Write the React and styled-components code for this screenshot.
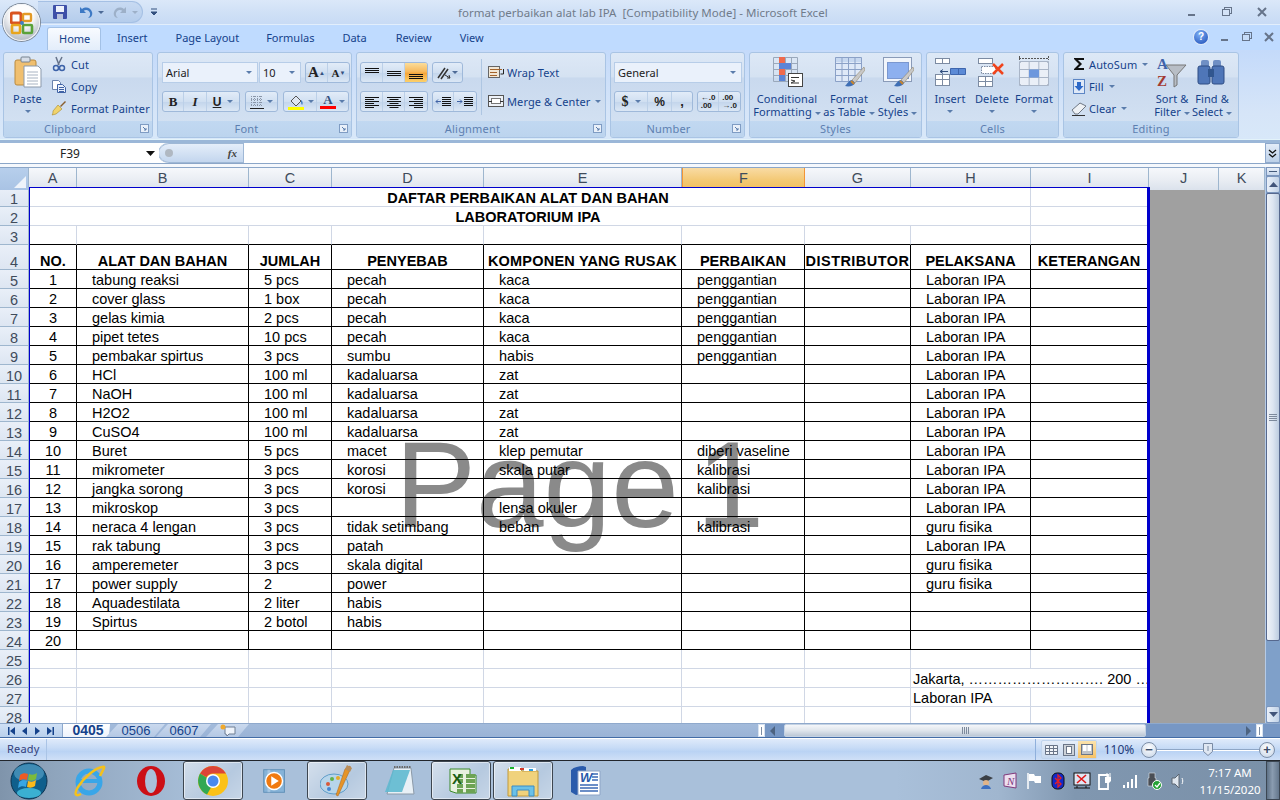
import React from 'react';
import styled, { createGlobalStyle } from 'styled-components';

const Global = createGlobalStyle`
  html, body { margin: 0; padding: 0; width: 1280px; height: 800px; overflow: hidden; background: #bfdbff; }
  #root { width: 1280px; height: 800px; }
  * { box-sizing: border-box; }
`;
const UI = `"Noto Sans", "Open Sans", sans-serif`;
const ARIAL = `"Liberation Sans", Arial, sans-serif`;

const Window = styled.div`
  position: relative; width: 1280px; height: 800px; display: flex; flex-direction: column; overflow: hidden;
  font-family: ${UI}; background: #bfdbff;
`;

/* ---------- title bar ---------- */
const TitleBar = styled.div`
  height: 25px; flex: none; display: flex; align-items: center; position: relative;
  background: linear-gradient(#dbe8f9, #cfe0f6 55%, #c8dbf5); border-bottom: 1px solid #e2eefc; box-shadow: 0 1px 0 #a9c6ea;
`;
const OfficeBtn = styled.div`
  position: absolute; left: 3px; top: 4px; width: 37px; height: 37px; border-radius: 50%; z-index: 5;
  display: flex; align-items: center; justify-content: center;
  background: radial-gradient(circle at 50% 30%, #fdfdfd 0 35%, #c9ced6 65%, #9aa3ad 100%);
  box-shadow: 0 0 0 1px #7e8a99, inset 0 0 0 1px #f4f5f7;
`;
const Qat = styled.div`
  margin-left: 38px; width: 105px; height: 22px; display: flex; align-items: center; gap: 4px; padding-left: 14px;
  background: linear-gradient(#c8daf2, #b5cdec); border: 1px solid #a5c0e4; border-left: none; border-radius: 0 11px 11px 0;
`;
const TitleText = styled.div`
  position: absolute; left: 458px; top: 5px; font-size: 11.5px; line-height: 16px; color: #707b8a; white-space: pre; letter-spacing: .03px;
`;
const WinCtrls = styled.div`
  margin-left: auto; display: flex; align-items: center; gap: 25px; padding-right: 13px;
`;
const Ctl = styled.svg`
  width: 10px; height: 10px; display: block; flex: none;
`;

/* ---------- tabs ---------- */
const TabRow = styled.div`
  height: 25px; flex: none; display: flex; align-items: flex-end; background: #bfdbff; padding-left: 47px; position: relative;
`;
const RibbonTab = styled.div`
  height: 23px; font-size: 11px; line-height: 21px; color: #15428b; margin-left: ${p => p.$ml || 0}px;
  ${p => p.$active && `
    width: 54px; padding-left: 11px;
    background: linear-gradient(#f8fbff, #e3edfa); border: 1px solid #a3c1e6; border-bottom: none; border-radius: 3px 3px 0 0;
  `}
`;
const HelpBox = styled.div`
  margin-left: auto; display: flex; align-items: center; gap: 12px; padding: 0 6px 6px 0;
`;
const Help = styled.div`
  width: 14px; height: 14px; border-radius: 50%; background: radial-gradient(circle at 40% 30%, #7fb0f5, #1849b5);
  color: #fff; font: bold 10px/14px ${ARIAL}; text-align: center; box-shadow: 0 0 0 1px #dfe9f8;
`;

/* ---------- ribbon ---------- */
const Ribbon = styled.div`
  height: 93px; flex: none; display: flex; gap: 4px; padding: 2px 3px 0 3px;
  background: linear-gradient(#c4dafa, #d6e5f8 70%, #d8e8f9); border-bottom: 3px solid #9bb7d8; box-shadow: inset 0 -1px 0 #e3f3fa;
`;
const Group = styled.div`
  width: ${p => p.$w}px; flex: none; height: 86px; display: flex; flex-direction: column; overflow: hidden;
  border: 1px solid #a9c4e4; border-radius: 3px; background: linear-gradient(#dde8f6, #d5e2f2 28%, #c9d9ee 30%, #d5e3f3);
`;
const GroupBody = styled.div`
  flex: 1; display: flex; min-height: 0;
`;
const GroupFoot = styled.div`
  height: 16px; flex: none; position: relative; background: linear-gradient(#c1d8f1, #bcd4ee); padding-right: ${p => p.$pr || 0}px;
  color: #5d7fb0; font-size: 11px; line-height: 15px; text-align: center; letter-spacing: .2px;
`;
const Launcher = styled.svg`
  position: absolute; right: 3px; top: 3px; width: 9px; height: 9px;
`;
const BigBtn = styled.div`
  width: ${p => p.$w}px; flex: none; display: flex; flex-direction: column; align-items: center; padding-top: 3px;
  color: #15428b; font-size: 11px; line-height: 13px; text-align: center; white-space: nowrap; letter-spacing: .1px;
`;
const BigIcon = styled.svg`
  width: 32px; height: 32px; display: block; margin-bottom: 4px; flex: none;
`;
const Caret = styled.span`
  display: inline-block; width: 0; height: 0; border: 3px solid transparent; border-top: 3px solid ${p => p.$c || '#5a7cab'}; border-bottom: none;
  vertical-align: middle; margin-left: ${p => p.$ml ?? 3}px; margin-top: ${p => p.$mt || 0}px;
`;
const SmallCol = styled.div`
  display: flex; flex-direction: column; gap: ${p => p.$gap || 0}px; padding: ${p => p.$top ?? 0}px 0 0 ${p => p.$left || 0}px; flex: none; width: ${p => p.$w ? `${p.$w}px` : 'auto'};
`;
const SmallBtn = styled.div`
  height: 22px; display: flex; align-items: center; gap: ${p => p.$gap ?? 4}px; font-size: 11px; color: #15428b; white-space: nowrap; letter-spacing: .1px;
`;
const Small = styled.svg`
  width: 16px; height: 16px; flex: none; display: block;
`;
const Rows = styled.div`
  display: flex; flex-direction: column; gap: 8px; padding: 9px 0 0 ${p => p.$left ?? 3}px;
`;
const Line = styled.div`
  display: flex; gap: ${p => p.$gap ?? 4}px; align-items: center;
`;
const Combo = styled.div`
  width: ${p => p.$w}px; height: 21px; background: #eaf1fb; border: 1px solid #b7cde8; display: flex; align-items: center; justify-content: space-between;
  padding: 0 5px 0 3px; font-size: 11px; color: #222;
`;
const BtnGroup = styled.div`
  height: 21px; display: flex; border: 1px solid #9fb9da; border-radius: 3px; background: linear-gradient(#e2ecf8, #d0dff1 50%, #c4d6ec 55%, #dbe7f5); overflow: hidden;
`;
const Seg = styled.div`
  width: ${p => p.$w || 23}px; flex: none; display: flex; align-items: center; justify-content: center; border-right: 1px solid #bcd0e8;
  font: ${p => p.$font || `bold 12px ${ARIAL}`}; color: #222;
  &:last-child { border-right: none; }
  ${p => p.$on && 'background: linear-gradient(#fbdd9a, #f7b95c 45%, #f5a73c 55%, #fcd06b);'}
`;
const Divider = styled.div`
  width: 1px; height: 56px; background: #aec6e2; margin: 6px 6px 0 4px; flex: none;
`;

/* ---------- formula bar ---------- */
const FormulaBar = styled.div`
  height: 21px; flex: none; display: flex; background: #fff; border-bottom: 1px solid #8ba6c8;
`;
const NameBox = styled.div`
  width: 159px; display: flex; align-items: center; background: #fff; font: 12px ${UI}; color: #222; padding-left: 60px; position: relative;
`;
const NameCaret = styled.svg`
  position: absolute; left: 146px; top: 8px; width: 9px; height: 5px;
`;
const FxBlock = styled.div`
  width: 85px; height: 20px; background: linear-gradient(#e5eefa, #c3d6ee); border: 1px solid #9fb8d6; border-left: none; border-radius: 11px 0 0 11px;
  box-shadow: -1px 0 0 #9fb8d6; display: flex; align-items: center; justify-content: space-between; padding: 0 6px 0 6px;
  font: italic bold 11px "Liberation Serif", serif; color: #444;
`;
const Dot = styled.div`
  width: 8px; height: 8px; border-radius: 50%; background: #b0b8c2;
`;
const FormulaInput = styled.div`
  flex: 1; background: #fff;
`;
const Expand = styled.div`
  width: 15px; background: linear-gradient(#e3ecf8, #bcd0e8); border: 1px solid #8fa9cc; display: flex; align-items: center; justify-content: center;
`;
const Gap = styled.div`
  height: 3px; flex: none; background: #f5f8fc;
`;

/* ---------- sheet ---------- */
const SheetWrap = styled.div`
  height: 556px; flex: none; display: flex; position: relative; overflow: hidden; background: #a0a0a0;
`;
const SheetMain = styled.div`
  width: 1265px; flex: none; overflow: hidden; display: flex; flex-direction: column;
`;
const ColHead = styled.div`
  height: 21px; flex: none; display: grid; grid-template-columns: 29px 48px 172px 83px 152px 198px 123px 106px 120px 118px 70px 46px;
  border-top: 1px solid #8ba6c8; border-bottom: 1px solid #9eb6ce;
`;
const Corner = styled.div`
  background: linear-gradient(#b7cfec, #a9c3e4); border-right: 1px solid #9eb6ce; position: relative; overflow: hidden;
  &::after { content: ''; position: absolute; right: 2px; bottom: 2px; border-style: solid; border-width: 0 0 12px 12px; border-color: transparent transparent #eef3fa transparent; }
`;
const ColCell = styled.div`
  font: 14.5px/21px ${ARIAL}; text-align: center; color: #3f4b5b; border-right: 1px solid #9eb6ce;
  background: ${p => p.$on ? 'linear-gradient(#f9dba4, #f3c873 60%, #f1c05f)' : 'linear-gradient(#f6f8fb, #e9edf3 55%, #dbe2ec)'};
  ${p => p.$on && 'border: 1px solid #f29536; border-top: none;'}
`;
const Body = styled.div`
  display: flex; flex: 1; min-height: 0; align-items: flex-start;
`;
const RowHead = styled.div`
  width: 29px; flex: none; display: flex; flex-direction: column; background: #e4ecf7;
`;
const RowNum = styled.div`
  height: ${p => p.$h || 19}px; flex: none; font: 14.5px/14px ${ARIAL}; color: #3f4b5b; text-align: center; border-bottom: 1px solid #9eb6ce;
  border-right: 1px solid #9eb6ce; background: linear-gradient(#e9eff8, #dde6f2); display: flex; align-items: flex-end; justify-content: center;
`;
const Grid = styled.div`
  width: 1121px; flex: none; display: grid; grid-template-columns: 47px 172px 83px 152px 198px 123px 106px 120px 116px;
  grid-template-rows: repeat(3, 19px) 25px repeat(24, 19px);
  background: #fff; border-top: 1px solid #0000cc; border-left: 1px solid #0000cc; border-right: 3px solid #0000cc; margin-top: -1px; position: relative;
`;
const Cell = styled.div`
  position: relative; z-index: 1;
  font: 14.5px/16px ${ARIAL}; color: #000; white-space: nowrap; overflow: hidden; min-width: 0;
  display: flex; align-items: flex-end; padding: 0 ${p => p.$padR || 0}px 0 ${p => p.$pad ?? 15}px;
  justify-content: ${p => p.$center ? 'center' : 'flex-start'};
  font-weight: ${p => p.$bold ? 700 : 400};
  letter-spacing: ${p => p.$ls || 0}px;
  border-right: 1px solid ${p => p.$line ? '#000' : '#d0d7e5'};
  border-bottom: 1px solid ${p => (p.$line || p.$below) ? '#000' : '#d0d7e5'};
  ${p => p.$span && `grid-column: span ${p.$span};`}
  ${p => p.$noRight && 'border-right: none;'}
`;
const Watermark = styled.div`
  position: absolute; z-index: 0; left: 365px; top: 237px; font: 121.5px/1 ${ARIAL}; word-spacing: -16px; color: #8a8a8a; white-space: nowrap; pointer-events: none;
`;
const VScroll = styled.div`
  width: 15px; flex: none; display: flex; flex-direction: column; background: #7fa0c9; border-left: 1px solid #b6cbe6;
`;
const Splitter = styled.div`
  height: 9px; flex: none; background: linear-gradient(#e8eff9, #c7d7ec); border: 1px solid #7b95bc; display: flex; align-items: center; justify-content: center;
  &::after { content: ''; width: 8px; height: 1px; background: #43597a; }
`;
const ArrowBtn = styled.div`
  height: 17px; flex: none; display: flex; align-items: center; justify-content: center;
  background: linear-gradient(90deg, #e9eff8, #d6e2f1 50%, #c2d2e7); border: 1px solid #7b95bc; border-radius: 2px;
`;
const Thumb = styled.div`
  height: 448px; flex: none; border: 1px solid #56688e; border-radius: 2px; display: flex; align-items: center; justify-content: center;
  background: linear-gradient(90deg, #eef2f8, #dce5f1 50%, #bccce0);
`;
const Grip = styled.div`
  width: 8px; height: 7px; background: repeating-linear-gradient(#7d8a9c 0 1px, transparent 1px 2px);
`;
const Spring = styled.div`
  flex: 1;
`;

/* ---------- sheet tabs ---------- */
const TabBar = styled.div`
  height: 15px; flex: none; display: flex; align-items: stretch; background: linear-gradient(#a3bbdb, #9ab3d6); border-top: 1px solid #8fa9cc; border-bottom: 1px solid #436ca6;
`;
const TabNav = styled.div`
  width: 63px; flex: none; background: linear-gradient(#cfe0f5, #b9d0ec); display: flex; align-items: center; justify-content: space-around; padding: 0 4px; color: #15428b; border-right: 1px solid #8fa9cc;
`;
const SheetTab = styled.div`
  height: 13px; width: ${p => p.$w}px; flex: none; margin-left: ${p => p.$ml || 0}px; color: #15428b; text-align: center;
  font: ${p => p.$on ? `bold 14px/13px ${ARIAL}` : `13px/13px ${ARIAL}`}; padding-left: ${p => p.$on ? 3 : 0}px;
  background: ${p => p.$on ? 'linear-gradient(#fff, #eef3fb)' : 'linear-gradient(#cad9ee, #b4c8e4)'};
  clip-path: ${p => p.$on ? 'polygon(0 0, 100% 0, calc(100% - 1px) 100%, 0 100%)' : 'polygon(0 100%, 12px 0, calc(100% - 1px) 0, calc(100% - 12px) 100%)'};
`;
const NewTab = styled(SheetTab)`
  display: flex; align-items: center; justify-content: center;
`;
const TabRest = styled.div`
  flex: 1; display: flex; align-items: center; justify-content: flex-end;
`;
const HArea = styled.div`
  height: 100%; display: flex; align-items: center; background: #7797c4;
`;
const Handle = styled.div`
  width: 7px; height: 13px; background: #fff; border: 1px solid #d8e3f1; flex: none; display: flex; align-items: center; justify-content: center;
  &::after { content: ''; width: 1px; height: 8px; background: #7b8ca3; }
`;
const HTri = styled.div`
  width: 0; height: 0; border-top: 5px solid transparent; border-bottom: 5px solid transparent; flex: none;
  ${p => p.$dir === 'l' ? 'border-right: 5px solid #4d6380;' : 'border-left: 5px solid #4d6380;'}
  margin: ${p => p.$m};
`;
const HThumb = styled.div`
  width: 362px; height: 13px; flex: none; border-radius: 2px; background: linear-gradient(#f4f6f9, #dfe5ec 50%, #bcc8d6); display: flex; align-items: center; justify-content: center; border: 1px solid #c4d2e3;
`;
const HGrip = styled.div`
  width: 7px; height: 7px; background: repeating-linear-gradient(90deg, #7d8a9c 0 1px, transparent 1px 2px);
`;
const HTrack = styled.div`
  flex: none; width: 100px; height: 13px;
`;
const EndPad = styled.div`
  width: 17px; height: 100%; flex: none; background: #7797c4;
`;

/* ---------- status bar ---------- */
const StatusBar = styled.div`
  height: 22px; flex: none; display: flex; align-items: center; font-size: 11px; color: #15428b;
  background: linear-gradient(#dfeafa, #c8dcf6 40%, #bad3f4 60%, #cfe0f7); border-top: 1px solid #fff;
`;
const Ready = styled.div`
  width: 47px; height: 100%; padding-left: 7px; line-height: 20px; border-right: 1px solid #aac4e6; color: #33407a; letter-spacing: .2px;
`;
const ViewBox = styled.div`
  margin-left: auto; height: 100%; display: flex; align-items: center; padding-left: 5px; border-left: 1px solid #8fb0dc;
`;
const ViewBtns = styled.div`
  display: flex; height: 19px; border: 1px solid #c0d4ec; border-radius: 2px; background: linear-gradient(#e6eef9, #c8d9ef);
`;
const ViewBtn = styled.div`
  width: 18px; display: flex; align-items: center; justify-content: center;
  ${p => p.$on && 'background: linear-gradient(#fbe3ad, #f7c266);'}
`;
const ZoomText = styled.div`
  width: 44px; text-align: center; font-size: 12px; color: #1e3a78;
`;
const ZoomRound = styled.div`
  width: 16px; height: 16px; border-radius: 50%; border: 1px solid #7d8fa8; background: radial-gradient(circle at 50% 35%, #fff, #c4d3e6); flex: none;
  display: flex; align-items: center; justify-content: center; font: bold 13px/1 ${ARIAL}; color: #3b4d68; margin-right: ${p => p.$mr || 0}px;
`;
const Slider = styled.div`
  width: 102px; height: 1px; background: #8ea6c6; flex: none; position: relative; box-shadow: 0 1px 0 #fff;
`;
const SliderKnob = styled.svg`
  position: absolute; left: 46px; top: -6px; width: 10px; height: 13px;
`;

/* ---------- taskbar ---------- */
const Taskbar = styled.div`
  height: 40px; flex: none; display: flex; align-items: stretch; border-top: 1px solid #22262c;
  background: linear-gradient(90deg, #7f94ab 0, #8ea4bc 4%, #a9c0da 16%, #a9c0da 70%, #a0b6cf 78%, #8097b0 84%, #7a90a8 100%);
`;
const TaskSlot = styled.div`
  width: ${p => p.$w || 62}px; flex: none; display: flex; align-items: center; justify-content: center;
`;
const TaskItem = styled.div`
  width: 60px; height: 39px; display: flex; align-items: center; justify-content: center; border-radius: 3px;
  ${p => p.$open && `
    background: linear-gradient(135deg, rgba(255,255,255,.5), rgba(255,255,255,.15) 60%, rgba(255,255,255,.35));
    border: 1px solid #3d4650; box-shadow: inset 0 0 0 1px rgba(255,255,255,.5);
  `}
`;
const TaskIcon = styled.svg`
  width: ${p => p.$s || 34}px; height: ${p => p.$s || 34}px; display: block;
`;
const Tray = styled.div`
  margin-left: auto; display: flex; align-items: center; gap: 6px;
`;
const TrayIcon = styled.svg`
  width: 18px; height: 18px; display: block; flex: none;
`;
const Clock = styled.div`
  width: 62px; margin-left: 6px; color: #fff; font-size: 11.5px; line-height: 17px; text-align: center; white-space: nowrap;
`;
const ShowDesk = styled.div`
  width: 14px; margin-left: -1px; background: linear-gradient(90deg, #5e7186, #8a9cb0 45%, #64778c); border: 1px solid #3c4753; height: 100%;
`;

/* ---------- icons ---------- */
const Clip = () => (<BigIcon viewBox="0 0 32 32">
  <rect x="3" y="4" width="21" height="25" rx="2" fill="#f0bf6f" stroke="#b98a3f" />
  <rect x="9" y="1" width="9" height="5" rx="1" fill="#d7dee8" stroke="#77828f" />
  <path d="M12 10h14l3 3v18H12z" fill="#fff" stroke="#8b99ab" />
  <path d="M15 16h11M15 19h11M15 22h11M15 25h11M15 28h11" stroke="#a8b3c2" />
</BigIcon>);
const TableIcon = ({ children }) => (<BigIcon viewBox="0 0 32 32">{children}</BigIcon>);
const gridLines = (x, y, w, h, n, m, c = '#9aa8bb') => {
  const out = [];
  for (let i = 0; i <= n; i++) out.push(<path key={'v' + i} d={`M${x + (w * i) / n} ${y}v${h}`} stroke={c} />);
  for (let j = 0; j <= m; j++) out.push(<path key={'h' + j} d={`M${x} ${y + (h * j) / m}h${w}`} stroke={c} />);
  return out;
};
const Brush = () => (<g><path d="M31 11 19 24l3 3L32 14z" fill="#c8c8c8" stroke="#8a7a58" strokeWidth=".5" /><path d="M19 24c-3 0-4 3-7 6 4 1 9 0 10-3z" fill="#3f6fb5" /><path d="M18 25l3 3" stroke="#c8852e" strokeWidth="2" /></g>);
const Tri = ({ x = 0, y = 0, c = '#4d6a96' }) => <path d={`M${x} ${y}h6l-3 3z`} fill={c} />;

const Launch = () => (<Launcher viewBox="0 0 9 9"><rect x=".5" y=".5" width="8" height="8" fill="#e9f0f9" stroke="#7f9cc3" /><path d="M3 3l3 3M6 4v2H4" stroke="#5a7cab" fill="none" /></Launcher>);

const HEAD = [['NO.'], ['ALAT DAN BAHAN'], ['JUMLAH'], ['PENYEBAB'], ['KOMPONEN YANG RUSAK', .2], ['PERBAIKAN'], ['DISTRIBUTOR', .45], ['PELAKSANA'], ['KETERANGAN']];
const DATA = [
  [5, '1', 'tabung reaksi', '5 pcs', 'pecah', 'kaca', 'penggantian', '', 'Laboran IPA'],
  [6, '2', 'cover glass', '1 box', 'pecah', 'kaca', 'penggantian', '', 'Laboran IPA'],
  [7, '3', 'gelas kimia', '2 pcs', 'pecah', 'kaca', 'penggantian', '', 'Laboran IPA'],
  [8, '4', 'pipet tetes', '10 pcs', 'pecah', 'kaca', 'penggantian', '', 'Laboran IPA'],
  [9, '5', 'pembakar spirtus', '3 pcs', 'sumbu', 'habis', 'penggantian', '', 'Laboran IPA'],
  [10, '6', 'HCl', '100 ml', 'kadaluarsa', 'zat', '', '', 'Laboran IPA'],
  [11, '7', 'NaOH', '100 ml', 'kadaluarsa', 'zat', '', '', 'Laboran IPA'],
  [12, '8', 'H2O2', '100 ml', 'kadaluarsa', 'zat', '', '', 'Laboran IPA'],
  [13, '9', 'CuSO4', '100 ml', 'kadaluarsa', 'zat', '', '', 'Laboran IPA'],
  [14, '10', 'Buret', '5 pcs', 'macet', 'klep pemutar', 'diberi vaseline', '', 'Laboran IPA'],
  [15, '11', 'mikrometer', '3 pcs', 'korosi', 'skala putar', 'kalibrasi', '', 'Laboran IPA'],
  [16, '12', 'jangka sorong', '3 pcs', 'korosi', '', 'kalibrasi', '', 'Laboran IPA'],
  [17, '13', 'mikroskop', '3 pcs', '', 'lensa okuler', '', '', 'Laboran IPA'],
  [18, '14', 'neraca 4 lengan', '3 pcs', 'tidak setimbang', 'beban', 'kalibrasi', '', 'guru fisika'],
  [19, '15', 'rak tabung', '3 pcs', 'patah', '', '', '', 'Laboran IPA'],
  [20, '16', 'amperemeter', '3 pcs', 'skala digital', '', '', '', 'guru fisika'],
  [21, '17', 'power supply', '2', 'power', '', '', '', 'guru fisika'],
  [22, '18', 'Aquadestilata', '2 liter', 'habis', '', '', '', ''],
  [23, '19', 'Spirtus', '2 botol', 'habis', '', '', '', ''],
  [24, '20', '', '', '', '', '', '', ''],
];
const COLS = ['A', 'B', 'C', 'D', 'E', 'F', 'G', 'H', 'I', 'J', 'K'];

const blank = (k, n = 9, from = 0) => Array.from({ length: n }, (_, i) => <Cell key={k + i} $noRight={i + from === 8} />);

export default function App() {
  return (
    <Window>
      <Global />
      <OfficeBtn>
        <svg width="24" height="24" viewBox="0 0 24 24">
          <rect x="1" y="2" width="10" height="10" rx="2" fill="none" stroke="#d9531e" strokeWidth="3" />
          <rect x="13" y="3" width="8" height="7" rx="1" fill="none" stroke="#e39a26" strokeWidth="2.4" />
          <rect x="2" y="14" width="8" height="8" rx="1" fill="none" stroke="#e8a51e" strokeWidth="2.6" />
          <rect x="13" y="14" width="9" height="8" rx="1" fill="none" stroke="#5aa23a" strokeWidth="2.6" />
          <circle cx="12" cy="12" r="2" fill="#3f7fc4" />
        </svg>
      </OfficeBtn>
      <TitleBar>
        <Qat>
          <svg width="16" height="16" viewBox="0 0 16 16"><rect x="1" y="1" width="14" height="14" rx="1" fill="#3e50a8" /><rect x="4" y="2" width="8" height="6" fill="#eef2fb" /><rect x="5" y="10" width="6" height="5" fill="#b9c3dd" /></svg>
          <svg width="16" height="16" viewBox="0 0 16 16" style={{ marginLeft: 6 }}><path d="M2 3v6h6L5.800 6.800C8 5 11 6 12 9c.5 2-.5 4-2 5 3 0 5-3 4-6-1-4-6-6-10-3z" fill="#3d79c4" /></svg>
          <svg width="6" height="3" viewBox="0 0 6 3"><Tri /></svg>
          <svg width="16" height="16" viewBox="0 0 16 16" style={{ marginLeft: 4 }}><path d="M14 3v6H8l2.200-2.200C8 5 5 6 4 9c-.5 2 .5 4 2 5-3 0-5-3-4-6 1-4 6-6 10-3z" fill="#9db0c8" /></svg>
          <svg width="6" height="3" viewBox="0 0 6 3"><Tri c="#9db0c8" /></svg>
        </Qat>
        <svg width="8" height="10" viewBox="0 0 8 10" style={{ marginLeft: 7 }}><path d="M1 2h6M1 5h6l-3 3z" stroke="#33507f" fill="#33507f" /></svg>
        <TitleText>format perbaikan alat lab IPA  [Compatibility Mode] - Microsoft Excel</TitleText>
        <WinCtrls>
          <Ctl viewBox="0 0 10 10"><rect x="1" y="7" width="7" height="2" fill="#66748a" /></Ctl>
          <Ctl viewBox="0 0 10 10"><rect x="2.500" y="0.500" width="7" height="6" fill="none" stroke="#66748a" /><rect x="0.500" y="2.500" width="7" height="6" fill="#d4e3f7" stroke="#66748a" /></Ctl>
          <Ctl viewBox="0 0 10 10"><path d="M1 1l8 8M9 1l-8 8" stroke="#66748a" strokeWidth="2" /></Ctl>
        </WinCtrls>
      </TitleBar>
      <TabRow>
        <RibbonTab $active>Home</RibbonTab>
        <RibbonTab $ml={16}>Insert</RibbonTab>
        <RibbonTab $ml={28}>Page Layout</RibbonTab>
        <RibbonTab $ml={27}>Formulas</RibbonTab>
        <RibbonTab $ml={28}>Data</RibbonTab>
        <RibbonTab $ml={29}>Review</RibbonTab>
        <RibbonTab $ml={28}>View</RibbonTab>
        <HelpBox>
          <Help>?</Help>
          <Ctl viewBox="0 0 10 10"><rect x="1" y="7" width="7" height="2" fill="#66748a" /></Ctl>
          <Ctl viewBox="0 0 10 10"><rect x="2.500" y="0.500" width="7" height="6" fill="none" stroke="#66748a" /><rect x="0.500" y="2.500" width="7" height="6" fill="#c6dcf8" stroke="#66748a" /></Ctl>
          <Ctl viewBox="0 0 10 10"><path d="M1 1l8 8M9 1l-8 8" stroke="#66748a" strokeWidth="2" /></Ctl>
        </HelpBox>
      </TabRow>
      <Ribbon>
        <Group $w={150}>
          <GroupBody>
            <BigBtn $w={47}>
              <Clip />
              <div>Paste</div>
              <Caret $ml={0} $mt={5} />
            </BigBtn>
            <SmallCol>
              <SmallBtn><Small viewBox="0 0 16 16"><path d="M5 1l3 8M11 1L7 9" stroke="#66738a" strokeWidth="1.500" /><circle cx="5" cy="12" r="2.500" fill="none" stroke="#3c62a8" strokeWidth="1.500" /><circle cx="11" cy="12" r="2.500" fill="none" stroke="#3c62a8" strokeWidth="1.500" /></Small>Cut</SmallBtn>
              <SmallBtn><Small viewBox="0 0 16 16"><path d="M1.500 2.500h6l2 2v7h-8z" fill="#fff" stroke="#6a83ad" /><path d="M6.500 6.500h5l3 3v5h-8z" fill="#e9f0fb" stroke="#3f62a5" /><path d="M8 9.500h5M8 11.500h5M8 13.500h5" stroke="#3f62a5" /></Small>Copy</SmallBtn>
              <SmallBtn><Small viewBox="0 0 16 16"><path d="M9 6l5-5 1 1-5 5z" fill="#8a5f2c" /><path d="M2 11l5-6 4 4-6 5c-1 0-3 1-4 1 1-1 1-3 1-4z" fill="#f0d36c" stroke="#a98a2c" strokeWidth=".6" /></Small>Format Painter</SmallBtn>
            </SmallCol>
          </GroupBody>
          <GroupFoot $pr={16}>Clipboard<Launch /></GroupFoot>
        </Group>
        <Group $w={195}>
          <GroupBody>
            <Rows $left={4}>
              <Line $gap={4}>
                <Line $gap={1}>
                  <Combo $w={96}>Arial<Caret /></Combo>
                  <Combo $w={42}>10<Caret /></Combo>
                </Line>
                <BtnGroup>
                  <Seg $w={22} $font={`bold 15px "Liberation Serif", serif`}>A<sup style={{ fontSize: 6, color: '#33507f' }}>▲</sup></Seg>
                  <Seg $w={21} $font={`bold 11px "Liberation Serif", serif`}>A<sup style={{ fontSize: 6, color: '#33507f' }}>▼</sup></Seg>
                </BtnGroup>
              </Line>
              <Line $gap={5}>
                <BtnGroup>
                  <Seg $w={21} $font={`bold 13px "Liberation Serif", serif`}>B</Seg>
                  <Seg $w={23} $font={`italic bold 13px "Liberation Serif", serif`}>I</Seg>
                  <Seg $w={32} $font={`bold 12px ${ARIAL}`}><u>U</u><Caret $ml={6} /></Seg>
                </BtnGroup>
                <BtnGroup>
                  <Seg $w={31}><svg width="14" height="14" viewBox="0 0 14 14"><path d="M1 1.500h12M1 4.500h12M1 7.500h12M1 10.500h12M1.500 1v10M4.500 1v10M7.500 1v10M10.500 1v10" stroke="#8a96a8" strokeDasharray="1 1" /><path d="M0 13.500h14" stroke="#222" /></svg><Caret /></Seg>
                </BtnGroup>
                <BtnGroup>
                  <Seg $w={33}><svg width="18" height="16" viewBox="0 0 18 16"><path d="M4 7l5-5 5 5-5 5z" fill="#dfe7f3" stroke="#555" /><path d="M14 6c2 1 2 4 1 5-1-1-1-3-1-5z" fill="#3f7fc4" /><rect x="1" y="13" width="16" height="3" fill="#ff0" /></svg><Caret /></Seg>
                  <Seg $w={31} $font={`bold 13px "Liberation Serif", serif`}><span style={{ display: 'flex', flexDirection: 'column', alignItems: 'center', lineHeight: '12px', color: '#33507f', width: 16 }}>A<span style={{ width: 16, height: 3, background: '#f00', display: 'block' }} /></span><Caret /></Seg>
                </BtnGroup>
              </Line>
            </Rows>
          </GroupBody>
          <GroupFoot $pr={16}>Font<Launch /></GroupFoot>
        </Group>
        <Group $w={250}>
          <GroupBody>
            <Rows>
              <Line $gap={4}>
                <BtnGroup>
                  {[[1.5, 3.5, 5.5], [4.5, 6.5, 8.5], [7.5, 9.5, 11.5]].map((ys, i) => (
                    <Seg key={i} $w={22} $on={i === 2}><svg width="14" height="12" viewBox="0 0 14 12">{ys.map(y => <path key={y} d={`M0 ${y}h14`} stroke="#111" />)}</svg></Seg>
                  ))}
                </BtnGroup>
                <BtnGroup>
                  <Seg $w={29}><svg width="22" height="14" viewBox="0 0 22 14"><path d="M1 12L8 2M4 13L11 3" stroke="#333" strokeWidth="1.500" /><path d="M8 9l5 3M13 12h-3M13 12l-1-3" stroke="#333" /><Tri x={15} y={5} /></svg></Seg>
                </BtnGroup>
              </Line>
              <Line $gap={4}>
                <BtnGroup>
                  {[0, 1, 2].map(i => (
                    <Seg key={i} $w={22}><svg width="14" height="12" viewBox="0 0 14 12">{[1.5, 3.5, 5.5, 7.5, 9.5, 11.5].map((y, k) => {
                      const w = k % 2 ? 9 : 14; const x = i === 0 ? 0 : i === 1 ? (14 - w) / 2 : 14 - w;
                      return <path key={y} d={`M${x} ${y}h${w}`} stroke="#111" />;
                    })}</svg></Seg>
                  ))}
                </BtnGroup>
                <BtnGroup>
                  <Seg $w={21}><svg width="16" height="12" viewBox="0 0 16 12"><path d="M7 1.500h9M7 3.500h9M7 5.500h9M7 7.500h9M7 9.500h9" stroke="#111" /><path d="M6 5.500H1l2-2M1 5.500l2 2" stroke="#3f62a5" fill="none" /></svg></Seg>
                  <Seg $w={22}><svg width="16" height="12" viewBox="0 0 16 12"><path d="M7 1.500h9M7 3.500h9M7 5.500h9M7 7.500h9M7 9.500h9" stroke="#111" /><path d="M0 5.500h5l-2-2M5 5.500l-2 2" stroke="#3f62a5" fill="none" /></svg></Seg>
                </BtnGroup>
              </Line>
            </Rows>
            <Divider />
            <SmallCol $top={8} $gap={7}>
              <SmallBtn $gap={3}><Small viewBox="0 0 16 16"><rect x="0.500" y="2.500" width="11" height="11" fill="#f2e7d5" stroke="#666" /><path d="M2 5.500h12M2 8.500h7M2 11.500h7" stroke="#a4632a" /><path d="M15.500 5v5h-3" stroke="#222" fill="none" /></Small>Wrap Text</SmallBtn>
              <SmallBtn $gap={3}><Small viewBox="0 0 16 16"><rect x="0.500" y="2.500" width="15" height="11" fill="#eef2f8" stroke="#555" /><rect x="3.500" y="5.500" width="9" height="5" fill="#fff" stroke="#777" /><path d="M1 8.500h3M12 8.500h3" stroke="#333" /></Small>Merge &amp; Center<Caret $ml={2} /></SmallBtn>
            </SmallCol>
          </GroupBody>
          <GroupFoot $pr={17}>Alignment<Launch /></GroupFoot>
        </Group>
        <Group $w={135}>
          <GroupBody>
            <Rows>
              <Combo $w={128}>General<Caret /></Combo>
              <Line $gap={4}>
                <BtnGroup>
                  <Seg $w={33} $font={`bold 14px "Liberation Serif", serif`}>$<Caret $ml={6} /></Seg>
                  <Seg $w={24} $font={`bold 12px ${ARIAL}`}>%</Seg>
                  <Seg $w={20} $font={`bold 13px ${ARIAL}`}>,</Seg>
                </BtnGroup>
                <BtnGroup>
                  <Seg $w={21} $font={`bold 8px/8px ${ARIAL}`}><span>←.0<br />.00</span></Seg>
                  <Seg $w={21} $font={`bold 8px/8px ${ARIAL}`}><span>.00<br />→.0</span></Seg>
                </BtnGroup>
              </Line>
            </Rows>
          </GroupBody>
          <GroupFoot $pr={18}>Number<Launch /></GroupFoot>
        </Group>
        <Group $w={173}>
          <GroupBody>
            <BigBtn $w={74}>
              <TableIcon>{gridLines(2.5, 1.5, 24, 24, 4, 4)}<rect x="8" y="1" width="6" height="24" fill="#ef6a4d" /><rect x="8" y="7" width="12" height="6" fill="#5b84d6" /><rect x="8" y="19" width="6" height="6" fill="#5b84d6" /><rect x="17.500" y="17.500" width="14" height="13" fill="#fff" stroke="#444" /><path d="M20 21.500h8M20 24l4 1-4 2h8" stroke="#333" fill="none" /></TableIcon>
              <div>Conditional</div>
              <div>Formatting<Caret /></div>
            </BigBtn>
            <BigBtn $w={50}>
              <TableIcon><rect x="2" y="1" width="26" height="24" fill="#dfe9f8" /><rect x="2" y="1" width="26" height="5" fill="#c7d8f0" />{gridLines(2.5, 1.5, 26, 24, 4, 4, '#8ba1c7')}<Brush /></TableIcon>
              <div>Format</div>
              <div>as Table<Caret /></div>
            </BigBtn>
            <BigBtn $w={47}>
              <TableIcon><rect x="1.500" y="1.500" width="28" height="24" fill="#f1f5fb" stroke="#8a9bb8" /><rect x="5.500" y="6.500" width="21" height="16" fill="#8db0ef" stroke="#7a97cf" /><Brush /></TableIcon>
              <div>Cell</div>
              <div>Styles<Caret /></div>
            </BigBtn>
          </GroupBody>
          <GroupFoot>Styles</GroupFoot>
        </Group>
        <Group $w={133}>
          <GroupBody>
            <BigBtn $w={46}>
              <TableIcon><rect x="1.500" y="2.500" width="14" height="5" fill="#fff" stroke="#7c8ba2" /><path d="M8.500 2v5" stroke="#7c8ba2" /><rect x="1.500" y="18.500" width="14" height="11" fill="#fff" stroke="#7c8ba2" /><path d="M8.500 18v11M1 23.500h14" stroke="#7c8ba2" /><path d="M16.500 12.500h15v6h-15z" fill="#5b8ad6" stroke="#3e66ad" /><path d="M24.500 12v6" stroke="#3e66ad" /><path d="M6 15.500h8M6 15.500l3-2M6 15.500l3 2" stroke="#33507f" fill="none" /></TableIcon>
              <div>Insert</div>
              <Caret $ml={0} $mt={5} />
            </BigBtn>
            <BigBtn $w={38}>
              <TableIcon><rect x="2.500" y="2.500" width="14" height="5" fill="#fff" stroke="#7c8ba2" /><rect x="5.500" y="10.500" width="14" height="7" fill="#fff" stroke="#7c8ba2" strokeDasharray="1.500 1" /><rect x="2.500" y="20.500" width="14" height="10" fill="#fff" stroke="#7c8ba2" /><path d="M9.500 20v10M2 25.500h14" stroke="#7c8ba2" /><path d="M17 8l10 10M27 8L17 18" stroke="#f0441c" strokeWidth="2.500" /></TableIcon>
              <div>Delete</div>
              <Caret $ml={0} $mt={5} />
            </BigBtn>
            <BigBtn $w={46}>
              <TableIcon><path d="M1 2.500h30M1.500 0v4M30.500 0v4" stroke="#555" strokeDasharray="2 1" /><rect x="1.500" y="5.500" width="29" height="24" rx="2" fill="#eaeff7" stroke="#8d9bb1" />{gridLines(1.5, 5.5, 29, 24, 3, 3, '#a9b5c7')}<rect x="11" y="13.500" width="10" height="8" fill="#6d97dd" /></TableIcon>
              <div>Format</div>
              <Caret $ml={0} $mt={5} />
            </BigBtn>
          </GroupBody>
          <GroupFoot>Cells</GroupFoot>
        </Group>
        <Group $w={176}>
          <GroupBody>
            <SmallCol $w={88} $left={7}>
              <SmallBtn $gap={2}><Small viewBox="0 0 16 16"><path d="M3 2h10v2H7l4 4-4 4h6v2H3v-1l5-5-5-5z" fill="#111" /></Small>AutoSum<Caret /></SmallBtn>
              <SmallBtn $gap={2}><Small viewBox="0 0 16 16"><rect x="2.500" y="1.500" width="11" height="14" fill="#dfe9f8" stroke="#5d86c4" /><path d="M6 4h4v4h2.500L8 13 3.500 8H6z" fill="#2d69c8" /></Small>Fill<Caret /></SmallBtn>
              <SmallBtn $gap={2}><Small viewBox="0 0 16 16"><path d="M1 10l8-7 6 3-8 8H4z" fill="#eef1f5" stroke="#6e7784" /><path d="M1 15.500h13" stroke="#333" /></Small>Clear<Caret /></SmallBtn>
            </SmallCol>
            <BigBtn $w={40}>
              <TableIcon><path d="M10 9h20L21 19v10l-3 2V19z" fill="#b8bec6" stroke="#777" /><text x="1" y="13" fontFamily="Liberation Serif" fontWeight="700" fontSize="15" fill="#3f62a8">A</text><text x="1" y="30" fontFamily="Liberation Serif" fontWeight="700" fontSize="15" fill="#a33a32">Z</text></TableIcon>
              <div>Sort &amp;</div>
              <div>Filter<Caret /></div>
            </BigBtn>
            <BigBtn $w={40}>
              <TableIcon><rect x="5" y="4" width="8" height="8" rx="2" fill="#6f8fc4" /><rect x="17" y="4" width="8" height="8" rx="2" fill="#6f8fc4" /><rect x="2" y="10" width="12" height="18" rx="2" fill="#4f76b8" stroke="#2f4d84" /><rect x="16" y="10" width="12" height="18" rx="2" fill="#4f76b8" stroke="#2f4d84" /><rect x="12" y="13" width="6" height="8" fill="#31568f" /></TableIcon>
              <div>Find &amp;</div>
              <div>Select<Caret /></div>
            </BigBtn>
          </GroupBody>
          <GroupFoot>Editing</GroupFoot>
        </Group>
      </Ribbon>
      <FormulaBar>
        <NameBox>F39<NameCaret viewBox="0 0 9 5"><path d="M0 0h9L4.500 5z" fill="#111" /></NameCaret></NameBox>
        <FxBlock><Dot />fx</FxBlock>
        <FormulaInput />
        <Expand><svg width="9" height="9" viewBox="0 0 9 9"><path d="M1 1l3.500 3L8 1M1 5l3.500 3L8 5" stroke="#111" strokeWidth="1.300" fill="none" /></svg></Expand>
      </FormulaBar>
      <Gap />
      <SheetWrap>
        <SheetMain>
          <ColHead>
            <Corner />
            {COLS.map(c => <ColCell key={c} $on={c === 'F'}>{c}</ColCell>)}
          </ColHead>
          <Body>
            <RowHead>
              {Array.from({ length: 28 }, (_, i) => <RowNum key={i} $h={i === 3 ? 25 : 19}>{i + 1}</RowNum>)}
            </RowHead>
            <Grid>
              <Watermark>Page 1</Watermark>
              <Cell $span={8} $center $bold $pad={0} $padR={4}>DAFTAR PERBAIKAN ALAT DAN BAHAN</Cell><Cell $noRight />
              <Cell $span={8} $center $bold $pad={0} $padR={4}>LABORATORIUM IPA</Cell><Cell $noRight />
              {COLS.slice(0, 9).map(c => <Cell key={'r3' + c} $noRight={c === 'I'} $below />)}
              {HEAD.map(([h, ls], i) => <Cell key={h} $line $bold $center $pad={0} $ls={ls} $noRight={i === 8}>{h}</Cell>)}
              {DATA.map(row => [...row.slice(1), ''].map((v, i) => (
                <Cell key={row[0] + '-' + i} $line $center={i === 0} $pad={i === 0 ? 0 : 15} $noRight={i === 8}>{v}</Cell>
              )))}
              {blank('r25')}
              {blank('r26', 7)}
              <Cell $pad={2} $span={2} $noRight>{'Jakarta, ' + '…'.repeat(9) + '. 200 …'}</Cell>
              {blank('r27', 7)}
              <Cell $pad={2}>Laboran IPA</Cell><Cell $noRight />
              {blank('r28')}
            </Grid>
          </Body>
        </SheetMain>
        <VScroll>
          <Splitter />
          <ArrowBtn><svg width="9" height="5" viewBox="0 0 9 5"><path d="M0 5h9L4.500 0z" fill="#42557a" /></svg></ArrowBtn>
          <Thumb><Grip /></Thumb>
          <Spring />
          <ArrowBtn><svg width="9" height="5" viewBox="0 0 9 5"><path d="M0 0h9L4.500 5z" fill="#42557a" /></svg></ArrowBtn>
        </VScroll>
      </SheetWrap>
      <TabBar>
        <TabNav>
          <svg width="7" height="8" viewBox="0 0 7 8"><path d="M0 0h1.500v8H0zM7 0v8L2 4z" fill="#15428b" /></svg>
          <svg width="5" height="8" viewBox="0 0 5 8"><path d="M5 0v8L0 4z" fill="#15428b" /></svg>
          <svg width="5" height="8" viewBox="0 0 5 8"><path d="M0 0v8l5-4z" fill="#15428b" /></svg>
          <svg width="7" height="8" viewBox="0 0 7 8"><path d="M5.500 0H7v8H5.500zM0 0v8l5-4z" fill="#15428b" /></svg>
        </TabNav>
        <SheetTab $on $w={47}>0405</SheetTab>
        <SheetTab $w={60} $ml={-4}>0506</SheetTab>
        <SheetTab $w={56} $ml={-10}>0607</SheetTab>
        <NewTab $w={44} $ml={-6}><svg width="16" height="13" viewBox="0 0 16 13"><path d="M5 3h10v7H9l-2 2-1-2H5z" fill="#eef3fa" stroke="#6f7e94" /><circle cx="3" cy="3" r="2.500" fill="#f0a92c" /></svg></NewTab>
        <TabRest>
          <Handle />
          <HArea>
            <HTri $dir="l" $m="0 9px 0 5px" />
            <HThumb><HGrip /></HThumb>
            <HTrack />
            <HTri $dir="r" $m="0 5px 0 0" />
          </HArea>
          <Handle />
          <EndPad />
        </TabRest>
      </TabBar>
      <StatusBar>
        <Ready>Ready</Ready>
        <ViewBox>
          <ViewBtns>
            <ViewBtn><svg width="13" height="10" viewBox="0 0 13 10"><path d="M0.500 0.500h12v9h-12zM0.500 3.500h12M0.500 6.500h12M4.500 0.500v9M8.500 0.500v9" fill="#f2f5f9" stroke="#6b7688" /></svg></ViewBtn>
            <ViewBtn><svg width="12" height="12" viewBox="0 0 12 12"><rect x=".5" y=".5" width="11" height="11" fill="#cdd2d8" stroke="#6b7688" /><rect x="3.500" y="2.500" width="5" height="7" fill="#fff" stroke="#6b7688" /></svg></ViewBtn>
            <ViewBtn $on><svg width="12" height="11" viewBox="0 0 12 11"><rect x=".5" y=".5" width="11" height="10" fill="#bfc3c8" stroke="#6b7688" /><rect x="2" y="1" width="3.500" height="6" fill="#fff" /><rect x="6.500" y="1" width="3.500" height="6" fill="#fff" /></svg></ViewBtn>
          </ViewBtns>
          <ZoomText>110%</ZoomText>
          <ZoomRound>−</ZoomRound>
          <Slider>
            <SliderKnob viewBox="0 0 10 13"><path d="M.5.500h9v8L5 12.500.5 8.500z" fill="#dfe7f2" stroke="#7a8ba4" /><path d="M5 3v5" stroke="#7a8ba4" /></SliderKnob>
          </Slider>
          <ZoomRound $mr={5}>+</ZoomRound>
        </ViewBox>
      </StatusBar>
      <Taskbar>
        <TaskSlot $w={58}>
          <TaskIcon viewBox="0 0 38 38" $s={38}>
            <circle cx="19" cy="19" r="18" fill="#0f5f8c" stroke="#0d3350" strokeWidth="1" />
            <ellipse cx="19" cy="11" rx="15" ry="9" fill="#5fa9cf" opacity=".6" />
            <ellipse cx="19" cy="31" rx="12" ry="5" fill="#4ed3ef" opacity=".7" />
            <path d="M10 13c3-2 5-2 8-1l-1 6c-3-1-5-1-8 1z" fill="#ef5a24" />
            <path d="M19 12c3 1 5 1 8-1l-1 6c-3 2-5 2-8 1z" fill="#7dbb3b" />
            <path d="M9 20c3-2 5-2 8-1l-1 6c-3-1-5-1-8 1z" fill="#37a6e4" />
            <path d="M18 19c3 1 5 1 8-1l-1 6c-3 2-5 2-8 1z" fill="#fbb91b" />
          </TaskIcon>
        </TaskSlot>
        <TaskSlot>
          <TaskIcon viewBox="0 0 34 34"><circle cx="17" cy="18" r="11" fill="none" stroke="#39a6e8" strokeWidth="5" /><path d="M8 17h18" stroke="#39a6e8" strokeWidth="4" /><path d="M28 12c4-8 6-10 2-9-6 1-17 9-24 20-4 7-3 10 3 7" fill="none" stroke="#f4c11c" strokeWidth="2.500" /></TaskIcon>
        </TaskSlot>
        <TaskSlot>
          <TaskIcon viewBox="0 0 34 34"><ellipse cx="17" cy="17" rx="14" ry="15" fill="#cc0f16" /><ellipse cx="17" cy="17" rx="6" ry="12" fill="#a9c0da" /></TaskIcon>
        </TaskSlot>
        <TaskSlot>
          <TaskItem $open>
            <TaskIcon viewBox="0 0 34 34"><circle cx="17" cy="17" r="15" fill="#fbc117" /><path d="M17 2a15 15 0 0 1 13 7.500H17a7.500 7.500 0 0 0-6.500 3.750L4 9.500A15 15 0 0 1 17 2z" fill="#dc4437" /><path d="M4 9.500A15 15 0 0 0 11 30.500l6.500-11.500-7-5.500z" fill="#32a852" /><circle cx="17" cy="17" r="7" fill="#fff" /><circle cx="17" cy="17" r="5.500" fill="#4a89ec" /></TaskIcon>
          </TaskItem>
        </TaskSlot>
        <TaskSlot>
          <TaskIcon viewBox="0 0 34 34" $s={32}><rect x="5" y="5" width="22" height="24" fill="#86b3d8" stroke="#5f8fb7" /><rect x="9" y="5" width="3" height="24" fill="#c8dced" opacity=".5" /><circle cx="16" cy="17" r="9" fill="#f07a10" stroke="#fff" strokeWidth="1.500" /><path d="M13 12l8 5-8 5z" fill="#fff" /></TaskIcon>
        </TaskSlot>
        <TaskSlot>
          <TaskItem $open>
            <TaskIcon viewBox="0 0 34 34"><ellipse cx="14" cy="20" rx="14" ry="10" fill="#b7d5ea" stroke="#5f9dc9" /><circle cx="8" cy="20" r="2" fill="#d85a3a" /><circle cx="12" cy="15" r="2" fill="#60b04a" /><circle cx="18" cy="14" r="2" fill="#e7a92a" /><circle cx="9" cy="25" r="2" fill="#4687d2" /><path d="M30 2c1 2 1 3 0 4l-12 26-2-1 9-26z" fill="#e59428" stroke="#a6631b" strokeWidth=".5" /><path d="M27 1l5 3-2 4-5-3z" fill="#b98d5a" /></TaskIcon>
          </TaskItem>
        </TaskSlot>
        <TaskSlot>
          <TaskIcon viewBox="0 0 34 34"><path d="M12 4h17l3 26H5z" fill="#e8f0f6" stroke="#8c9aa8" /><path d="M11 6h17L20 28H3z" fill="#5fb9d0" opacity=".9" /><path d="M12 3h17" stroke="#6a6a6a" strokeWidth="2" strokeDasharray="1.500 1" /></TaskIcon>
        </TaskSlot>
        <TaskSlot>
          <TaskItem $open>
            <TaskIcon viewBox="0 0 34 34"><path d="M6 5h20v6h6v18H12l-6-2z" fill="#e8f1df" stroke="#3a8a2a" strokeWidth="1" /><path d="M14 12h5M22 12h9M14 17h5M22 17h9M13 22h6M22 22h9M13 27h6M22 27h9" stroke="#6da354" strokeWidth="4" /><text x="8" y="20" fontFamily="Liberation Sans" fontWeight="700" fontSize="15" fill="#1d5c13">X</text></TaskIcon>
          </TaskItem>
        </TaskSlot>
        <TaskSlot>
          <TaskItem $open>
            <TaskIcon viewBox="0 0 34 34"><path d="M2 5h12l2 2h16v25H2z" fill="#f0d27c" stroke="#c19a3d" /><rect x="3" y="3" width="12" height="4" fill="#fff" /><rect x="18" y="4" width="12" height="3" fill="#fff" /><rect x="4" y="3" width="4" height="2" fill="#1bb52e" /><rect x="14" y="4" width="4" height="2" fill="#d23a2a" /><rect x="23" y="5" width="4" height="2" fill="#2d9fe0" /><path d="M6 32V22h22v10h-5v-6H11v6z" fill="#6ac1e8" stroke="#3a8cc4" /></TaskIcon>
          </TaskItem>
        </TaskSlot>
        <TaskSlot>
          <TaskIcon viewBox="0 0 34 34"><path d="M3 6c3-3 8-4 12-4l3 1v26L8 31l-5-3z" fill="#2a5bab" /><path d="M10 7h22v24H10z" fill="#fff" stroke="#8ea4c6" /><text x="12" y="18" fontFamily="Liberation Sans" fontWeight="700" fontStyle="italic" fontSize="13" fill="#2a5bab">W</text><path d="M24 10h6M24 13h6M24 16h6M12 21h18M12 24h18M12 27h18" stroke="#3b69b5" strokeWidth="1.700" /></TaskIcon>
        </TaskSlot>
        <Tray>
          <TrayIcon viewBox="0 0 18 18"><path d="M2 7l7-4 7 3-7 4z" fill="#3c4046" /><circle cx="9" cy="11" r="3" fill="#e0b48a" /><path d="M4 17c1-3 3-4 5-4s4 1 5 4z" fill="#3d6fc0" /></TrayIcon>
          <TrayIcon viewBox="0 0 18 18"><path d="M3 3l12-2v15L3 14z" fill="#ecdff0" stroke="#80397b" /><text x="6" y="13" fontFamily="Liberation Serif" fontStyle="italic" fontSize="11" fill="#80397b">N</text></TrayIcon>
          <TrayIcon viewBox="0 0 18 18"><path d="M3 1v16" stroke="#fff" strokeWidth="1.500" /><path d="M4 2h5l1 2h6v7h-6l-1-2H4z" fill="#fff" /></TrayIcon>
          <TrayIcon viewBox="0 0 18 18"><rect x="3" y="1" width="12" height="16" rx="5" fill="#1428c8" stroke="#111" /><path d="M6 6l6 6-3 3V3l3 3-6 6" stroke="#e82020" strokeWidth="1.300" fill="none" /></TrayIcon>
          <TrayIcon viewBox="0 0 18 18"><rect x="1" y="1" width="16" height="12" fill="#dfe6f4" stroke="#111" /><path d="M4 3l9 8M13 3l-9 8" stroke="#e01818" strokeWidth="1.600" /><path d="M1 16h16M4 14v2M13 14v2" stroke="#111" /></TrayIcon>
          <TrayIcon viewBox="0 0 18 18"><path d="M2 3h9v14H2z" fill="none" stroke="#fff" strokeWidth="1.800" /><path d="M8 5h6v4l-2 2H8z" fill="#fff" /><path d="M10 1v4M13 1v4" stroke="#fff" /></TrayIcon>
          <TrayIcon viewBox="0 0 18 18"><path d="M2 13h2v3H2zM6 10h2v6H6zM10 7h2v9h-2zM14 3h2v13h-2z" fill="#fff" /></TrayIcon>
          <TrayIcon viewBox="0 0 18 18"><path d="M4 1h6v5h1v8H3V6h1z" fill="#4a4e55" stroke="#dbe2ea" strokeWidth=".6" /><circle cx="12" cy="13" r="4.500" fill="#25a235" stroke="#fff" /><path d="M10 13l2 2 3-4" stroke="#fff" fill="none" strokeWidth="1.300" /></TrayIcon>
          <TrayIcon viewBox="0 0 18 18"><path d="M3 6h3l4-4v14l-4-4H3z" fill="#dfe6ee" stroke="#5c6672" /><path d="M13 6c1 2 1 4 0 6" stroke="#fff" fill="none" /></TrayIcon>
          <Clock>7:17 AM<br />11/15/2020</Clock>
          <ShowDesk />
        </Tray>
      </Taskbar>
    </Window>
  );
}
